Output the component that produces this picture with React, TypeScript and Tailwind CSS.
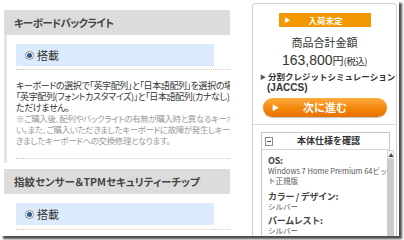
import React from 'react';

const jp = "font-['Noto_Sans_CJK_JP',sans-serif]";

const Radio = () => (
  <span className="inline-flex h-[9px] w-[9px] items-center justify-center rounded-full border border-[#8a8a8a] bg-white">
    <span className="h-[5px] w-[5px] rounded-full bg-[#2f5b8c]" />
  </span>
);

const OptionRow = ({ label }: { label: string }) => (
  <div className="flex h-[22px] w-[198px] items-center gap-[3px] bg-[#dcebfb] pl-[9px] text-[11px] text-[#333]">
    <Radio />
    <span>{label}</span>
  </div>
);

const Dotted = ({ className = '' }: { className?: string }) => (
  <div className={`border-b border-dotted border-[#d4c6b2] ${className}`} />
);

const SectionHeader = ({ title, tight }: { title: string; tight?: boolean }) => (
  <div
    className={`flex h-[25px] items-center bg-[#dcdcdc] pl-[10px] text-[10.5px] font-bold text-[#444] [font-feature-settings:'palt'] ${
      tight ? 'tracking-[-0.6px]' : ''
    }`}
  >
    {title}
  </div>
);

const specs = [
  { label: 'OS:', lines: ['Windows 7 Home Premium 64ビッ', 'ト正規版'] },
  { label: 'カラー / デザイン:', lines: ['シルバー'] },
  { label: 'パームレスト:', lines: ['シルバー'] },
];

export default function App() {
  return (
    <div className={`relative h-[240px] w-[404px] overflow-hidden bg-white ${jp}`}>
      <div className="flex h-[236px] w-[399px] overflow-hidden bg-white shadow-[3px_3px_2px_rgba(0,0,0,0.7)]">
        {/* left column */}
        <div className="ml-[4px] mt-[10px] flex w-[226px] shrink-0 flex-col overflow-hidden">
          <SectionHeader title="キーボードバックライト" tight />
          <div className="border-l-[3px] border-[#e4e4e4] pb-[4px] pl-[9px] pt-[9px]">
            <OptionRow label="搭載" />
            <Dotted className="mt-[3px]" />
            <div className="mt-[10px] whitespace-nowrap text-[9px] leading-[11px] tracking-[-0.4px] text-[#333] [font-feature-settings:'palt']">
              <div>キーボードの選択で「英字配列」と「日本語配列」を選択の場合、キーボード</div>
              <div>「英字配列(フォントカスタマイズ)」と「日本語配列(カナなし)」を</div>
              <div>ただけません。</div>
              <div className="text-[8.5px] text-[#9a9a9a]">
                <div>※ご購入後、配列やバックライトの有無が購入時と異なるキーボード</div>
                <div>い。また、ご購入いただきましたキーボードに故障が発生しキーボード</div>
                <div>きましたキーボードへの交換修理となります。</div>
              </div>
            </div>
            <Dotted className="mt-[12px]" />
          </div>

          <div className="mt-[6px]">
            <SectionHeader title="指紋センサー＆TPMセキュリティーチップ" />
            <div className="pl-[12px] pt-[9px]">
              <OptionRow label="搭載" />
              <Dotted className="mt-[4px]" />
            </div>
          </div>
        </div>

        {/* right column */}
        <div className="ml-[22px] mt-[3px] flex w-[145px] shrink-0 flex-col rounded-t-[4px] border border-b-0 border-[#cfcfcf] text-[#333]">
          <div className="mx-auto mt-[9px] flex h-[14px] w-[92px] items-center bg-[#f39800] pl-[6px] text-white">
            <span className="text-[6px] leading-[14px]">▶</span>
            <span className="flex-1 pr-[10px] text-center text-[8.5px] font-bold leading-[14px]">入荷未定</span>
          </div>
          <div className="mt-[8px] text-center text-[11px] leading-[14px]">商品合計金額</div>
          <div className="mt-[3px] flex items-baseline justify-center leading-[16px]">
            <span className="font-['Liberation_Sans',sans-serif] text-[14px]">163,800</span>
            <span className="text-[11px]">円</span>
            <span className="text-[9.5px] tracking-[-0.5px]">(税込)</span>
          </div>
          <div className="mt-[2px] flex items-center gap-[2px] whitespace-nowrap pl-[7px] text-[8.5px] font-bold leading-[11px]">
            <span className="text-[6px] text-[#555]">▶</span>
            <span>分割クレジットシミュレーション</span>
          </div>
          <div className="pl-[14px] font-['Liberation_Sans',sans-serif] text-[10px] font-bold leading-[11px]">(JACCS)</div>

          <div className="ml-[10px] mt-[5px] flex h-[22px] w-[124px] items-center rounded-full bg-gradient-to-b from-[#ffab3d] via-[#f58a0c] to-[#e86f00] pl-[9px] text-white shadow-[0_1px_1px_rgba(0,0,0,0.25)]">
            <span className="text-[7px] leading-none">▶</span>
            <span className="flex-1 pr-[16px] text-center text-[11px] font-bold leading-none">次に進む</span>
          </div>

          <div className="mt-[7px] border-b border-[#dcdcdc]" />

          <div className="ml-[8px] mt-[7px] flex w-[129px] flex-1 flex-col border border-b-0 border-[#c6c6c6]">
            <div className="relative flex h-[17px] items-center border-b border-[#d6d6d6]">
              <span className="absolute left-[3px] top-[4px] flex h-[9px] w-[8px] items-center justify-center border border-[#8c8c8c] bg-white">
                <span className="h-px w-[4px] bg-[#555]" />
              </span>
              <span className="flex-1 pl-[6px] text-center text-[9px] font-bold">本体仕様を確認</span>
            </div>
            <div className="flex flex-1">
              <div className="flex-1 pl-[6px] pt-[6px]">
                {specs.map((s, i) => (
                  <div key={s.label} className={i === 0 ? '' : i === 1 ? 'mt-[6px]' : 'mt-[4px]'}>
                    <div className="text-[9px] font-bold leading-[10px] tracking-[-0.3px] text-[#444]">{s.label}</div>
                    {s.lines.map((l) => (
                      <div key={l} className="whitespace-nowrap text-[7.5px] leading-[10px] text-[#555]">
                        {l}
                      </div>
                    ))}
                  </div>
                ))}
              </div>
              <div className="flex w-[8px] flex-col bg-[#cbcbcb]">
                <div className="flex h-[9px] items-center justify-center border border-[#d8d8d8] bg-[#f4f4f4] text-[5px] leading-none text-[#444]">▲</div>
              </div>
            </div>
          </div>
        </div>
      </div>
    </div>
  );
}
